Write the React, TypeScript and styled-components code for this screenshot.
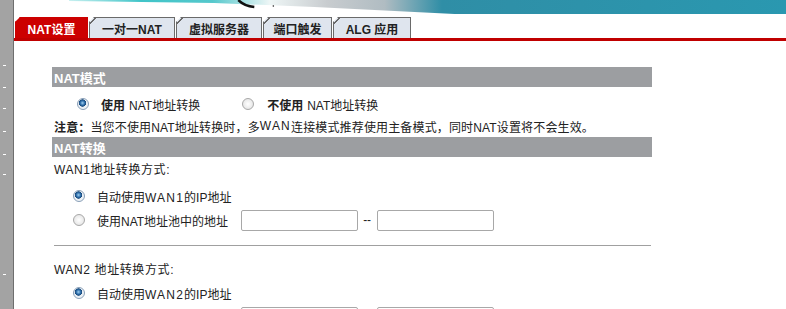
import React from "react";
import styled, { createGlobalStyle } from "styled-components";

const Global = createGlobalStyle`
  html, body { margin: 0; padding: 0; background: #ffffff; }
  body {
    font-family: "Liberation Sans", "Noto Sans CJK SC", sans-serif;
    font-size: 12px;
    color: #222;
    overflow: hidden;
  }
`;

const Page = styled.div`
  display: flex;
  width: 786px;
  height: 309px;
  overflow: hidden;
`;

const Side = styled.div`
  width: 14px;
  flex: none;
  background: #a3a3a3;
  border-right: 1px solid #6e6e6e;
  display: flex;
  flex-direction: column;
  padding-top: 65px;
  box-sizing: border-box;
`;

const Dash = styled.span<{ $gap: number }>`
  display: block;
  width: 3px;
  height: 1px;
  margin-left: 3px;
  background: #ffffff;
  margin-bottom: ${(p) => p.$gap}px;
`;

const Main = styled.div`
  flex: 1;
  display: flex;
  flex-direction: column;
  min-width: 0;
`;

const Banner = styled.svg`
  display: block;
  flex: none;
  width: 100%;
  height: 16px;
`;

const TabBar = styled.div`
  flex: none;
  display: flex;
  align-items: flex-end;
  gap: 1px;
  padding-left: 1px;
  height: 22px;
  border-bottom: 3px solid #c00000;
`;

const Tab = styled.div<{ $active?: boolean; $w: number }>`
  position: relative;
  width: ${(p) => p.$w}px;
  height: 21px;
  box-sizing: border-box;
  display: flex;
  align-items: center;
  justify-content: center;
  font-weight: bold;
  font-size: 12px;
  padding-top: 1px;
  color: ${(p) => (p.$active ? "#ffffff" : "#222222")};
  background: ${(p) => (p.$active ? "#cc0000" : "#dfe5ee")};
  border: 1px solid ${(p) => (p.$active ? "#cc0000" : "#6a6a6a")};
  border-bottom: none;
  clip-path: polygon(5px 0, 100% 0, 100% 100%, 0 100%, 0 5px);
  &::before {
    content: "";
    position: absolute;
    left: -1px;
    top: -1px;
    width: 8px;
    height: 8px;
    background: linear-gradient(
      135deg,
      transparent 0 40%,
      ${(p) => (p.$active ? "#cc0000" : "#6a6a6a")} 40% 55%,
      transparent 55%
    );
  }
`;

const Content = styled.div`
  flex: none;
  padding: 26px 0 0 38px;
  width: 600px;
  display: flex;
  flex-direction: column;
`;

const SectionHead = styled.div`
  height: 20px;
  background: #9c9ea1;
  color: #ffffff;
  font-weight: bold;
  font-size: 13px;
  display: flex;
  align-items: center;
  padding-left: 2px;
`;

const ModeRow = styled.div`
  display: flex;
  align-items: center;
  height: 34px;
  padding-left: 25px;
  margin-bottom: -6px;
`;

const Option = styled.label<{ $gap?: number }>`
  display: flex;
  align-items: center;
  margin-right: ${(p) => p.$gap ?? 0}px;
`;

const Radio = styled.input.attrs({ type: "radio" })`
  appearance: none;
  -webkit-appearance: none;
  width: 12px;
  height: 12px;
  margin: 0;
  flex: none;
  border-radius: 50%;
  border: 1px solid #a8a8a8;
  background: radial-gradient(circle at 50% 50%, #ffffff 0, #e8e8e8 70%, #d0d0d0 100%);
  box-sizing: border-box;
  &:checked {
    border-color: #8aa0b8;
    background: radial-gradient(
      circle at 45% 40%,
      #9fd0f0 0,
      #2a6aa8 28%,
      #1a4a7a 42%,
      #e8eef4 48%,
      #f4f6f8 100%
    );
  }
`;

const Strong = styled.b`
  margin: 0 4px 0 0;
`;

const Gap = styled.span<{ $w: number }>`
  display: inline-block;
  flex: none;
  width: ${(p) => p.$w}px;
`;

const Note = styled.div`
  height: 22px;
  display: flex;
  align-items: center;
  padding-left: 2px;
  letter-spacing: 0.15px;
`;

const Label = styled.div`
  height: 22px;
  display: flex;
  align-items: center;
  padding-left: 2px;
  letter-spacing: 0.6px;
`;

const Choice = styled.div<{ $top?: number }>`
  display: flex;
  align-items: center;
  height: 24px;
  padding-left: 21px;
  margin-top: ${(p) => p.$top ?? 0}px;
`;

const ChoiceText = styled.span`
  margin-left: 12px;
`;

const Wide = styled.span`
  letter-spacing: 1.2px;
`;

const Field = styled.input.attrs({ type: "text" })`
  width: 117px;
  height: 21px;
  box-sizing: border-box;
  border: 1px solid #a8a8a8;
  border-radius: 2px;
  padding: 0 3px;
  margin: 0;
  font: inherit;
  outline: none;
  background: #fff;
`;

const Sep = styled.span`
  margin: 0 6px 0 5px;
`;

const Rule = styled.hr`
  border: none;
  border-top: 1px solid #a0a0a0;
  margin: 13px 0 11px 2px;
  width: 597px;
`;

export default function App() {
  return (
    <>
      <Global />
      <Page>
        <Side>
          <Dash $gap={21} />
          <Dash $gap={20} />
          <Dash $gap={22} />
          <Dash $gap={22} />
          <Dash $gap={19} />
          <Dash $gap={99} />
          <Dash $gap={0} />
        </Side>
        <Main>
          <Banner viewBox="0 0 771 16" preserveAspectRatio="none">
            <defs>
              <linearGradient id="bg" x1="0" x2="1" y1="0" y2="0">
                <stop offset="0" stopColor="#c8f0f0" />
                <stop offset="0.1" stopColor="#40c4c8" />
                <stop offset="0.2" stopColor="#55c8cc" />
                <stop offset="0.28" stopColor="#eef6f6" />
                <stop offset="0.36" stopColor="#c8cccf" />
                <stop offset="0.44" stopColor="#b0bcc2" />
                <stop offset="0.52" stopColor="#2f8ea6" />
                <stop offset="1" stopColor="#2a98b0" />
              </linearGradient>
            </defs>
            <path d="M55 0 L771 0 L771 14 L440 14 L380 11 L300 7 L200 3 L55 1 Z" fill="url(#bg)" />
            <path d="M224 0 Q230 6 240 7" stroke="#111" strokeWidth="2.5" fill="none" />
            <circle cx="259" cy="6" r="0.8" fill="#222" />
          </Banner>
          <TabBar>
            <Tab $active $w={73}>NAT设置</Tab>
            <Tab $w={86}>一对一NAT</Tab>
            <Tab $w={86}>虚拟服务器</Tab>
            <Tab $w={69}>端口触发</Tab>
            <Tab $w={78}>ALG 应用</Tab>
          </TabBar>
          <Content>
            <SectionHead>NAT模式</SectionHead>
            <ModeRow>
              <Option $gap={42}>
                <Radio name="mode" defaultChecked />
                <Gap $w={12} />
                <Strong>使用</Strong>NAT地址转换
              </Option>
              <Option>
                <Radio name="mode" />
                <Gap $w={13} />
                <Strong>不使用</Strong>NAT地址转换
              </Option>
            </ModeRow>
            <Note>
              <b>注意：</b>当您不使用NAT地址转换时，多<Wide>WAN</Wide>连接模式推荐使用主备模式，同时NAT设置将不会生效。
            </Note>
            <SectionHead>NAT转换</SectionHead>
            <Label>WAN1地址转换方式:</Label>
            <Choice $top={5}>
              <Radio name="wan1" defaultChecked />
              <ChoiceText>自动使用<Wide>WAN1</Wide>的IP地址</ChoiceText>
            </Choice>
            <Choice>
              <Radio name="wan1" />
              <ChoiceText>使用NAT地址池中的地址</ChoiceText>
              <Gap $w={13} />
              <Field />
              <Sep>--</Sep>
              <Field />
            </Choice>
            <Rule />
            <Label>WAN2 地址转换方式:</Label>
            <Choice $top={2}>
              <Radio name="wan2" defaultChecked />
              <ChoiceText>自动使用<Wide>WAN2</Wide>的IP地址</ChoiceText>
            </Choice>
            <Choice>
              <Radio name="wan2" />
              <ChoiceText>使用NAT地址池中的地址</ChoiceText>
              <Gap $w={13} />
              <Field />
              <Sep>--</Sep>
              <Field />
            </Choice>
          </Content>
        </Main>
      </Page>
    </>
  );
}
